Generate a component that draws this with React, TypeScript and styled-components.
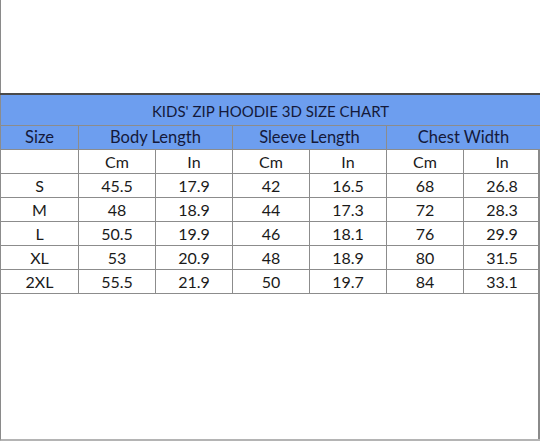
import React from "react";
import styled, { createGlobalStyle } from "styled-components";

const GlobalStyle = createGlobalStyle`
  html, body {
    margin: 0;
    padding: 0;
    background: #ffffff;
  }
`;

const blue = "#6d9eef";
const line = "#8c8c8c";

const Frame = styled.div`
  width: 540px;
  height: 441px;
  box-sizing: border-box;
  display: flex;
  flex-direction: column;
  border-left: 1px solid #8a8a8a;
  border-bottom: 2px solid #b4b4b4;
  font-family: Lato, "Open Sans", sans-serif;
`;

const TopSpace = styled.div`
  height: 93px;
  flex-shrink: 0;
`;

const Sheet = styled.div`
  flex: 1;
  border-right: 2px solid #8a8a8a;
  margin-left: -1px;
`;

const Table = styled.table`
  width: 540px;
  border-collapse: collapse;
  table-layout: fixed;
  color: #1a1a1a;
`;

const Cell = styled.td<{ head?: boolean; h?: number }>`
  height: ${p => p.h ?? 23}px;
  padding: 0;
  text-align: center;
  vertical-align: middle;
  font-size: 16px;
  line-height: 1;
  border: 1px solid ${line};
  ${p => p.head && `
    background: ${blue};
    color: #14193a;
    font-size: 16.5px;
  `}
`;

const TitleCell = styled(Cell)`
  border-top: 2px solid #4a4a4a;
  padding-top: 2px;
  font-size: 15px;
`;

const cols = [78, 77, 77, 77, 77, 77, 77];

const rows = [
  ["S", "45.5", "17.9", "42", "16.5", "68", "26.8"],
  ["M", "48", "18.9", "44", "17.3", "72", "28.3"],
  ["L", "50.5", "19.9", "46", "18.1", "76", "29.9"],
  ["XL", "53", "20.9", "48", "18.9", "80", "31.5"],
  ["2XL", "55.5", "21.9", "50", "19.7", "84", "33.1"],
];

export default function App() {
  return (
    <>
      <GlobalStyle />
      <Frame>
        <TopSpace />
        <Sheet>
          <Table>
            <colgroup>
              {cols.map((w, i) => (
                <col key={i} style={{ width: w }} />
              ))}
            </colgroup>
            <tbody>
              <tr>
                <TitleCell head h={28} colSpan={7}>
                  KIDS' ZIP HOODIE 3D SIZE CHART
                </TitleCell>
              </tr>
              <tr>
                <Cell head>Size</Cell>
                <Cell head colSpan={2}>Body Length</Cell>
                <Cell head colSpan={2}>Sleeve Length</Cell>
                <Cell head colSpan={2}>Chest Width</Cell>
              </tr>
              <tr>
                <Cell />
                <Cell>Cm</Cell>
                <Cell>In</Cell>
                <Cell>Cm</Cell>
                <Cell>In</Cell>
                <Cell>Cm</Cell>
                <Cell>In</Cell>
              </tr>
              {rows.map(r => (
                <tr key={r[0]}>
                  {r.map((v, i) => (
                    <Cell key={i}>{v}</Cell>
                  ))}
                </tr>
              ))}
            </tbody>
          </Table>
        </Sheet>
      </Frame>
    </>
  );
}
